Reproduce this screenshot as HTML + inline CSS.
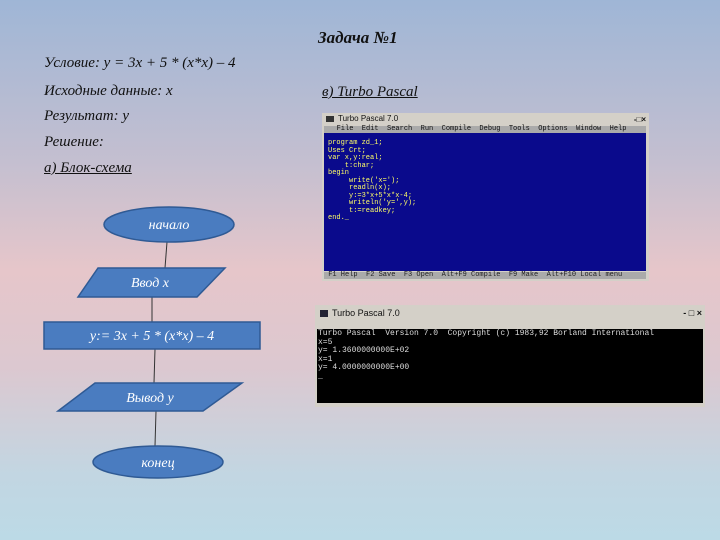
<!DOCTYPE html>
<html><head><meta charset="utf-8"><style>
body{margin:0;width:720px;height:540px;overflow:hidden;position:relative;
background:linear-gradient(180deg,#9fb6d6 0%,#c4bfd0 30%,#e6c6ca 50%,#dcc8d0 68%,#c2d6e2 88%,#bcdae6 100%);
font-family:"Liberation Serif","DejaVu Serif",serif;font-style:italic;color:#111}
.t{position:absolute;font-size:15px;white-space:nowrap}
.u{text-decoration:underline}
.m{font-family:"Liberation Mono",monospace;font-style:normal;font-size:7px;line-height:7.5px;white-space:pre;position:absolute}
</style></head><body>
<div class="t" style="left:318px;top:28px;font-size:17px;font-weight:bold">Задача №1</div>
<div class="t" style="left:44px;top:55px">Условие: y = 3x + 5 * (x*x) – 4</div>
<div class="t" style="left:44px;top:83px">Исходные данные: x</div>
<div class="t" style="left:44px;top:108px">Результат: y</div>
<div class="t" style="left:44px;top:134px">Решение:</div>
<div class="t u" style="left:44px;top:160px">а) Блок-схема</div>
<div class="t u" style="left:322px;top:84px">в) Turbo Pascal</div>

<svg style="position:absolute;left:0;top:0" width="720" height="540">
<g stroke="#333" stroke-width="1" fill="none">
<line x1="167" y1="242" x2="165" y2="268"/>
<line x1="152" y1="297" x2="152" y2="322"/>
<line x1="155" y1="349" x2="154" y2="383"/>
<line x1="156" y1="411" x2="155" y2="446"/>
</g>
<g fill="#4a7cc0" stroke="#2f5a94" stroke-width="1.5">
<ellipse cx="169" cy="224.5" rx="65" ry="17.5"/>
<polygon points="98,268 225,268 197,297 78,297"/>
<rect x="44" y="322" width="216" height="27"/>
<polygon points="95,383 242,383 203,411 58,411"/>
<ellipse cx="158" cy="462" rx="65" ry="16"/>
</g>
<g fill="#fff" font-family="Liberation Serif,serif" font-style="italic" font-size="14" text-anchor="middle">
<text x="169" y="229">начало</text>
<text x="150" y="287">Ввод x</text>
<text x="152" y="340">y:= 3x + 5 * (x*x) – 4</text>
<text x="150" y="402">Вывод y</text>
<text x="158" y="467">конец</text>
</g>
</svg>

<div style="position:absolute;left:322px;top:113px;width:327px;height:168px;background:#d4d0c8">
 <div style="position:absolute;left:4px;top:3px;width:8px;height:6px;background:#333"></div>
 <div style="position:absolute;left:16px;top:1px;font:8px 'Liberation Sans',sans-serif;font-style:normal">Turbo Pascal 7.0</div>
 <div style="position:absolute;right:3px;top:2px;font:bold 8px 'Liberation Sans',sans-serif;font-style:normal">-□×</div>
 <div style="position:absolute;left:2px;top:13px;width:322px;height:7px;background:#aaa;font:7px 'Liberation Mono',monospace;font-style:normal;white-space:pre;line-height:7px">   File  Edit  Search  Run  Compile  Debug  Tools  Options  Window  Help</div>
 <div style="position:absolute;left:2px;top:20px;width:322px;height:138px;background:#0a0a8c">
  <div class="m" style="left:4px;top:7px;color:#ff6">program zd_1;
Uses Crt;
var x,y:real;
    t:char;
begin
     write('x=');
     readln(x);
     y:=3*x+5*x*x-4;
     writeln('y=',y);
     t:=readkey;
end._</div>
 </div>
 <div style="position:absolute;left:2px;top:159px;width:322px;height:7px;background:#aaa;font:7px 'Liberation Mono',monospace;font-style:normal;white-space:pre;line-height:7px;color:#222"> F1 Help  F2 Save  F3 Open  Alt+F9 Compile  F9 Make  Alt+F10 Local menu</div>
</div>

<div style="position:absolute;left:315px;top:305px;width:390px;height:102px;background:#d4d0c8">
 <div style="position:absolute;left:5px;top:5px;width:8px;height:7px;background:#223"></div>
 <div style="position:absolute;left:17px;top:3px;font:9px 'Liberation Sans',sans-serif;font-style:normal">Turbo Pascal 7.0</div>
 <div style="position:absolute;right:3px;top:3px;font:bold 9px 'Liberation Sans',sans-serif;font-style:normal">- □ ×</div>
 <div style="position:absolute;left:2px;top:24px;width:386px;height:74px;background:#000">
  <div class="m" style="left:1px;top:1px;color:#ddd;font-size:8px;line-height:8.5px">Turbo Pascal  Version 7.0  Copyright (c) 1983,92 Borland International
x=5
y= 1.3600000000E+02
x=1
y= 4.0000000000E+00
_</div>
 </div>
</div>
</body></html>
